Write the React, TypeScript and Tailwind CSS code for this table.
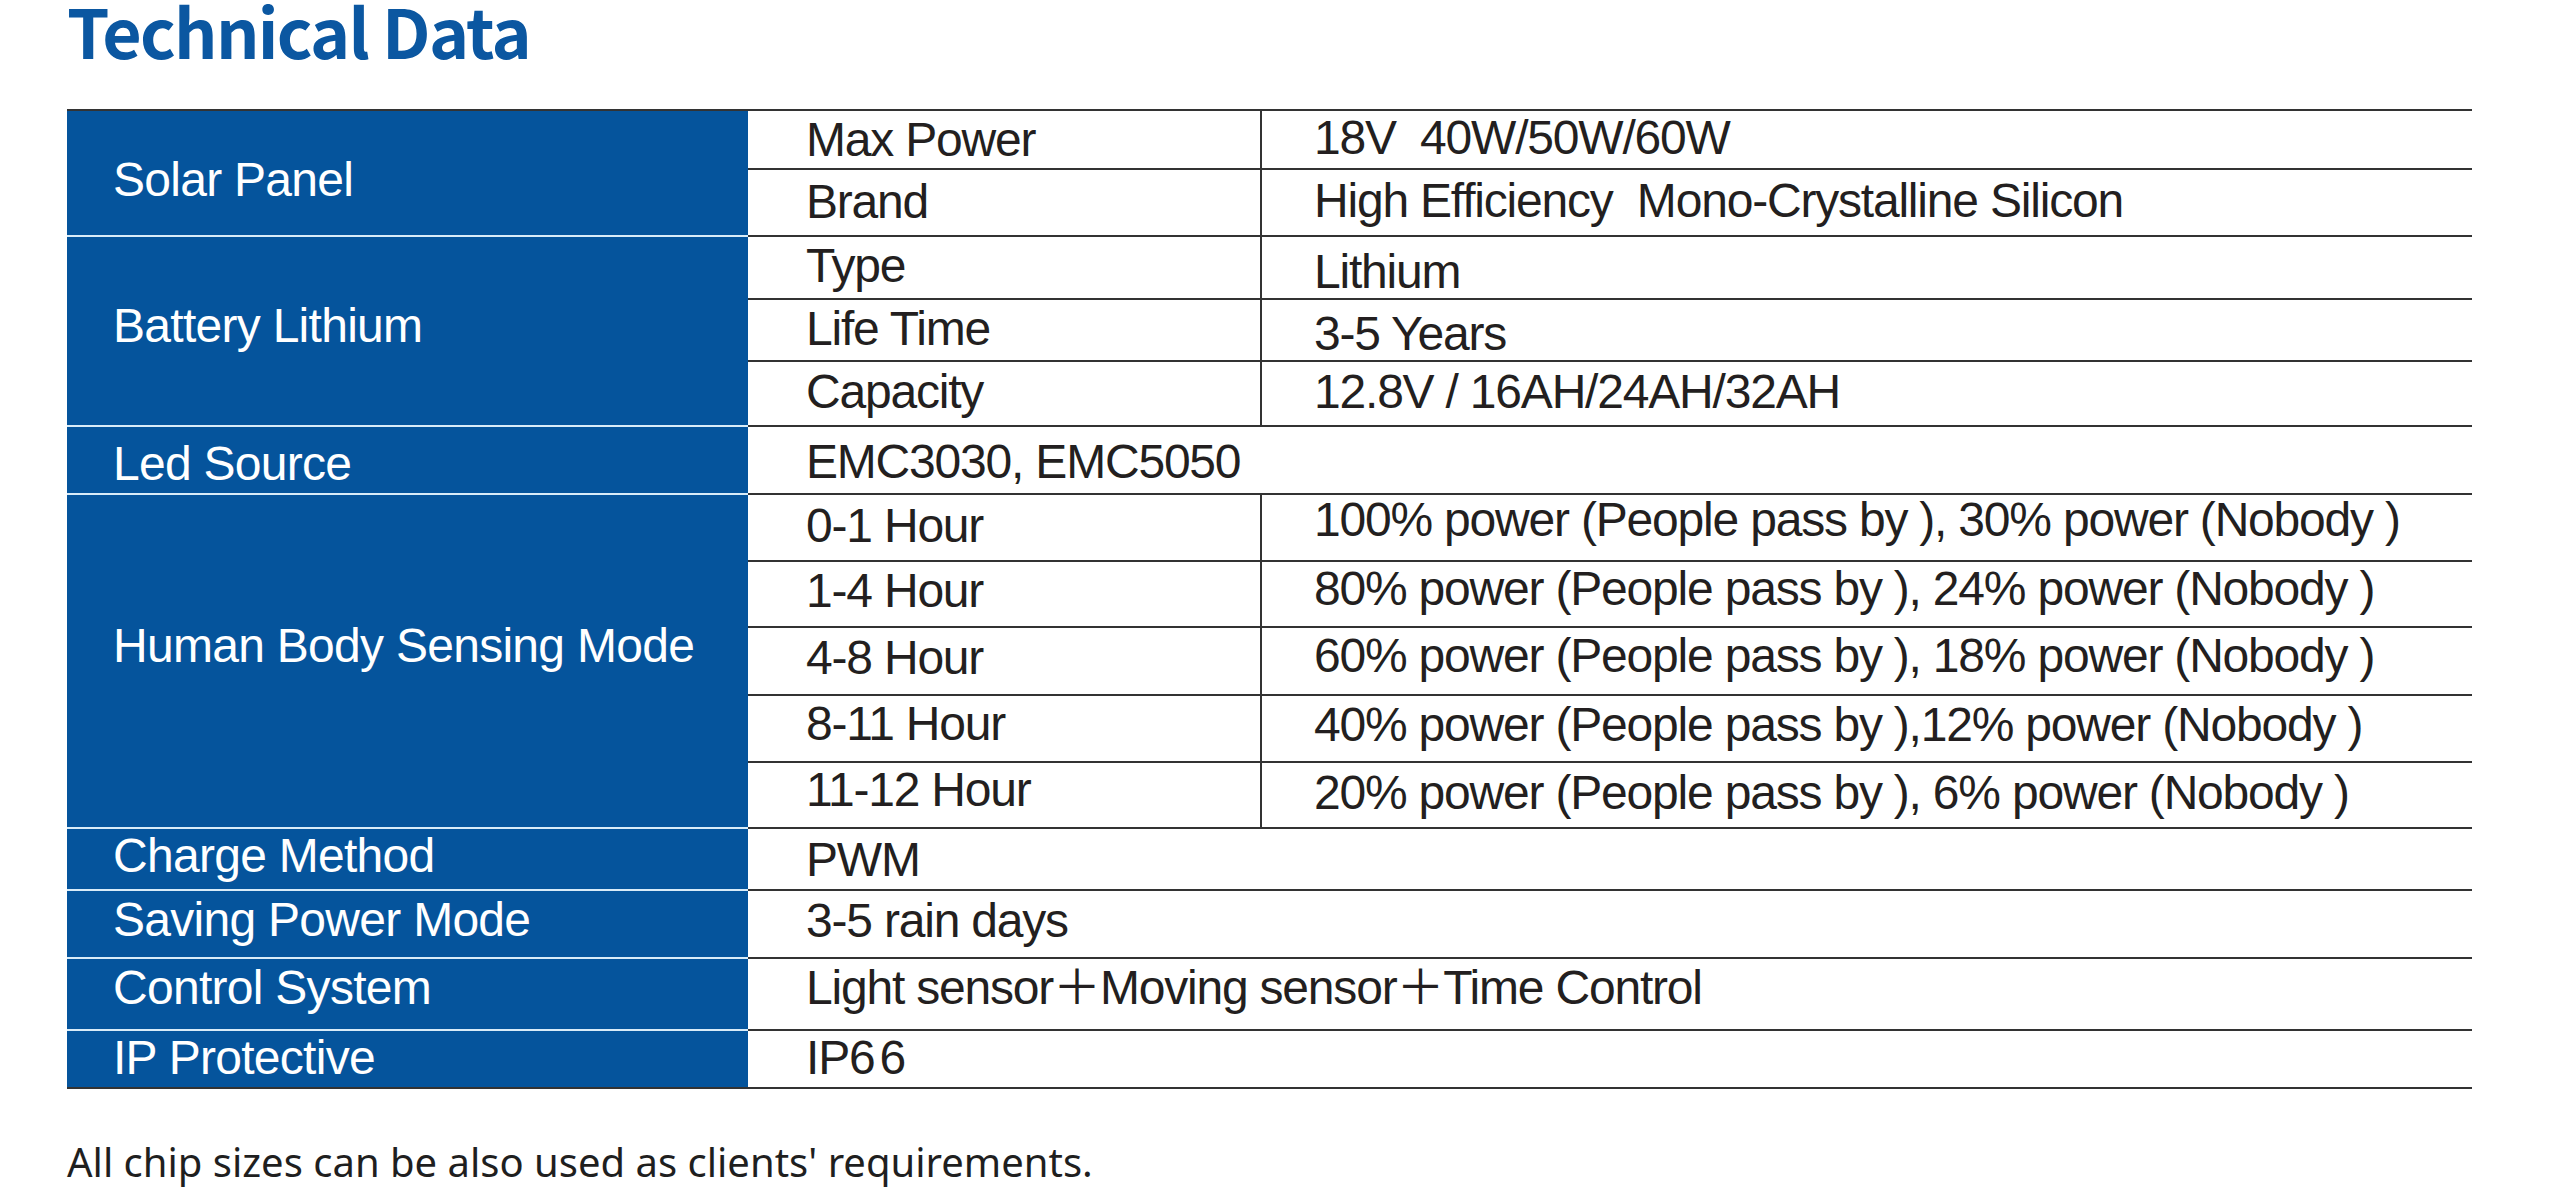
const BLUE = "bg-[#05549c]";

function Label({ text, span, top, first }: { text: string; span: string; top: string; first?: boolean }) {
  return (
    <div
      className={`${span} ${BLUE} ${top} pl-[46px] tracking-[-0.015em] text-white ${
        first ? "" : "border-t-2 border-[#d9ecf9]"
      }`}
    >
      {text}
    </div>
  );
}

function Cell({
  text,
  top,
  first,
  value,
  wide,
}: {
  text: React.ReactNode;
  top: string;
  first?: boolean;
  value?: boolean;
  wide?: boolean;
}) {
  return (
    <div
      className={`whitespace-pre text-[#231f20] ${top} ${first ? "" : "border-t-2 border-[#333]"} ${
        value ? "border-l-2 border-l-[#333] pl-[52px]" : "pl-[58px]"
      } ${wide ? "col-span-2" : ""}`}
    >
      {text}
    </div>
  );
}

export default function App() {
  return (
    <div className="min-h-[1198px] bg-white pl-[67px] pt-[10px]">
      <h1 className="font-['Noto_Sans_CJK_SC','Noto_Sans',sans-serif] text-[68px] font-bold leading-[40px] tracking-[-0.025em] text-[#0b57a1]">
        Technical Data
      </h1>

      <div className="mt-[59px] grid w-[2405px] grid-cols-[681px_512px_1212px] grid-rows-[57px_67px_63px_62px_65px_68px_67px_66px_68px_67px_66px_62px_68px_72px_58px] border-y-2 border-[#333] font-['Liberation_Sans',Arial,'Noto_Sans_CJK_SC',sans-serif] text-[48px] leading-[48px] tracking-[-0.025em]">
        <Label text="Solar Panel" span="row-span-2" top="pt-[45px]" first />
        <Cell text="Max Power" top="pt-[5px]" first />
        <Cell text="18V  40W/50W/60W" top="pt-[3px]" first value />
        <Cell text="Brand" top="pt-[8px]" />
        <Cell text="High Efficiency  Mono-Crystalline Silicon" top="pt-[7px]" value />

        <Label text="Battery Lithium" span="row-span-3" top="pt-[65px]" />
        <Cell text="Type" top="pt-[5px]" />
        <Cell text="Lithium" top="pt-[11px]" value />
        <Cell text="Life Time" top="pt-[5px]" />
        <Cell text="3-5 Years" top="pt-[10px]" value />
        <Cell text="Capacity" top="pt-[6px]" />
        <Cell text="12.8V / 16AH/24AH/32AH" top="pt-[6px]" value />

        <Label text="Led Source" span="row-span-1" top="pt-[13px]" />
        <Cell text="EMC3030, EMC5050" top="pt-[11px]" wide />

        <Label text="Human Body Sensing Mode" span="row-span-5" top="pt-[127px]" />
        <Cell text="0-1 Hour" top="pt-[7px]" />
        <Cell text="100% power (People pass by ), 30% power (Nobody )" top="pt-[1px]" value />
        <Cell text="1-4 Hour" top="pt-[5px]" />
        <Cell text="80% power (People pass by ), 24% power (Nobody )" top="pt-[3px]" value />
        <Cell text="4-8 Hour" top="pt-[6px]" />
        <Cell text="60% power (People pass by ), 18% power (Nobody )" top="pt-[4px]" value />
        <Cell text="8-11 Hour" top="pt-[4px]" />
        <Cell text="40% power (People pass by ),12% power (Nobody )" top="pt-[5px]" value />
        <Cell text="11-12 Hour" top="pt-[3px]" />
        <Cell text="20% power (People pass by ), 6% power (Nobody )" top="pt-[6px]" value />

        <Label text="Charge Method" span="row-span-1" top="pt-[3px]" />
        <Cell text="PWM" top="pt-[7px]" wide />
        <Label text="Saving Power Mode" span="row-span-1" top="pt-[5px]" />
        <Cell text="3-5 rain days" top="pt-[6px]" wide />
        <Label text="Control System" span="row-span-1" top="pt-[5px]" />
        <Cell text="Light sensor＋Moving sensor＋Time Control" top="pt-[5px]" wide />
        <Label text="IP Protective" span="row-span-1" top="pt-[3px]" />
        <Cell
          text={
            <>
              IP6<span className="ml-[5px]">6</span>
            </>
          }
          top="pt-[3px]"
          wide
        />
      </div>

      <p className="mt-[48px] font-['Noto_Sans',sans-serif] text-[40px] leading-[50px] text-[#1f1f1f]">
        All chip sizes can be also used as clients' requirements.
      </p>
    </div>
  );
}
